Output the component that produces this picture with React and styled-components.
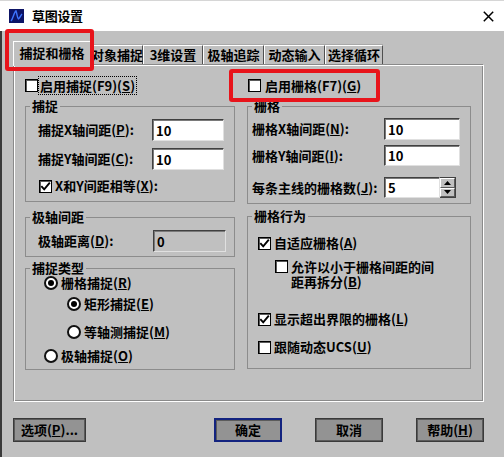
import React from 'react';
import styled, { createGlobalStyle } from 'styled-components';

const FONT = `"Noto Sans CJK SC", "Noto Sans", "Liberation Sans", sans-serif`;

const Global = createGlobalStyle`
  html, body { margin: 0; padding: 0; background: #c0c0c0; }
  #root { width: 504px; height: 457px; overflow: hidden; }
  * { box-sizing: border-box; }
`;

const Window = styled.div`
  position: relative;
  width: 504px;
  height: 457px;
  display: flex;
  flex-direction: column;
  background: #c0c0c0;
  font-family: ${FONT};
  font-size: 13px;
  font-weight: 700;
  line-height: 16px;
  color: #000;
  overflow: hidden;
`;

const TitleBar = styled.div`
  height: 31px;
  flex: none;
  background: #fff;
  border-top: 1px solid #d6d6d6;
  display: flex;
  align-items: center;
  padding: 0 10px 0 9px;
`;

const TitleText = styled.div`
  margin-left: 8px;
  flex: 1;
  font-size: 13px;
  letter-spacing: -0.3px;
`;

const Body = styled.div`
  flex: 1;
  display: flex;
  flex-direction: column;
  border-left: 2px solid #3a3a3a;
  padding: 10px 0 0 11px;
`;

const TabStrip = styled.div`
  display: flex;
  align-items: flex-end;
  height: 23px;
`;

const Tab = styled.div`
  width: ${p => p.$w}px;
  height: ${p => (p.$active ? 25 : 19)}px;
  margin-bottom: ${p => (p.$active ? -2 : 0)}px;
  padding-bottom: ${p => (p.$active ? 2 : 0)}px;
  position: relative;
  z-index: ${p => (p.$active ? 3 : 1)};
  background: #c0c0c0;
  border-top: 1px solid #fff;
  border-left: 1px solid #fff;
  border-right: 1px solid #505050;
  box-shadow: ${p => (p.$active ? 'none' : '0 -1px 0 #a8a8a8')};
  display: flex;
  align-items: center;
  justify-content: center;
  white-space: nowrap;
`;

const Panel = styled.div`
  position: relative;
  z-index: 2;
  width: 471px;
  height: 338px;
  border: 1px solid;
  border-color: #8a8a8a #fff #fff #8a8a8a;
  box-shadow: inset 1px 1px 0 #fff, inset -1px -1px 0 #8a8a8a;
  padding: 12px 12px 0 11px;
  display: grid;
  grid-template-columns: 210px 224px;
  column-gap: 12px;
  align-items: start;
`;

const Column = styled.div`
  display: flex;
  flex-direction: column;
`;

const TopCheck = styled.div`
  display: flex;
  align-items: center;
  height: 17px;
  padding-left: ${p => p.$pl || 0}px;
  gap: ${p => p.$gap || 0}px;
`;

const FocusLabel = styled.span`
  outline: 1px dotted #000;
  outline-offset: 0;
  padding: 0 1px;
  margin-left: 1px;
  line-height: 17px;
  white-space: nowrap;
`;

const Group = styled.fieldset`
  margin: ${p => p.$mt || 0}px 0 0 0;
  height: ${p => p.$h}px;
  border: 1px solid #8c8c8c;
  padding: 0;
  min-width: 0;
`;

const Legend = styled.legend`
  margin-left: 4px;
  padding: 0 2px;
  line-height: 16px;
  height: 16px;
`;

const GroupBody = styled.div`
  display: flex;
  flex-direction: column;
  padding: ${p => p.$pt || 0}px ${p => p.$pr || 0}px 0 ${p => p.$pl || 0}px;
`;

const FieldRow = styled.div`
  display: flex;
  align-items: center;
  justify-content: space-between;
  height: ${p => p.$h || 22}px;
  margin-top: ${p => p.$mt || 0}px;
  white-space: nowrap;
`;

const TextBox = styled.input`
  width: ${p => p.$w}px;
  height: 100%;
  margin: 0;
  padding: 0 3px;
  font: inherit;
  color: #000;
  background: ${p => (p.disabled ? '#c0c0c0' : '#fff')};
  border: 1px solid;
  border-color: #404040 #e0e0e0 #e0e0e0 #404040;
  box-shadow: inset 1px 1px 0 #7a7a7a;
  outline: none;
  &:disabled { color: #000; }
`;

const Spinner = styled.div`
  display: flex;
  width: 72px;
  height: 100%;
  margin-right: 4px;
`;

const SpinButtons = styled.div`
  width: 16px;
  display: flex;
  flex-direction: column;
  background: #c0c0c0;
  border: 1px solid #404040;
  border-left: none;
`;

const SpinBtn = styled.div`
  flex: 1;
  border: 1px solid;
  border-color: #fff #5a5a5a #5a5a5a #fff;
  display: flex;
  align-items: center;
  justify-content: center;
`;

const OptionRow = styled.div`
  display: flex;
  align-items: ${p => (p.$top ? 'flex-start' : 'center')};
  gap: 3px;
  height: ${p => (p.$auto ? 'auto' : '14px')};
  margin-top: ${p => p.$mt || 0}px;
  padding-left: ${p => p.$indent || 0}px;
  white-space: nowrap;
`;

const TwoLine = styled.span`
  line-height: 15px;
  white-space: normal;
`;

const Box = styled.span`
  width: 13px;
  height: 13px;
  flex: none;
  border: 1px solid #000;
  box-shadow: inset 1px 1px 0 #5a5a5a;
  background: #fff;
  display: flex;
  align-items: center;
  justify-content: center;
  margin-top: ${p => p.$mt || 0}px;
`;

const Radio = styled.span`
  width: 14px;
  height: 14px;
  flex: none;
  border-radius: 50%;
  border: 2px solid #111;
  background: #fff;
  display: flex;
  align-items: center;
  justify-content: center;
  &::after {
    content: '';
    width: 6px;
    height: 6px;
    border-radius: 50%;
    background: #000;
    display: ${p => (p.$on ? 'block' : 'none')};
  }
`;

const ButtonRow = styled.div`
  display: flex;
  width: 471px;
  margin-top: 16px;
`;

const ButtonGroup = styled.div`
  display: flex;
  gap: 33px;
  margin-left: auto;
`;

const Button = styled.button`
  width: ${p => p.$w}px;
  height: 24px;
  margin: 0;
  padding: 0;
  font: inherit;
  color: #000;
  background: #939393;
  border: ${p => (p.$default ? '2px solid #13237f' : '1px solid #3a3a3a')};
  box-shadow: ${p => (p.$default ? 'inset 1px 1px 0 #5b5b5b' : 'inset 1px 1px 0 #5b5b5b, inset -1px -1px 0 #5b5b5b')};
  display: flex;
  align-items: center;
  justify-content: center;
  white-space: nowrap;
`;

const Highlight = styled.div`
  position: absolute;
  left: ${p => p.$x}px;
  top: ${p => p.$y}px;
  width: ${p => p.$w}px;
  height: ${p => p.$h}px;
  border: 4px solid #e8141b;
  border-radius: 3px;
  z-index: 10;
  pointer-events: none;
`;

const U = styled.u`
  text-decoration: underline;
  text-underline-offset: 1px;
  text-decoration-thickness: 1px;
`;

function CheckBox({ checked, mt }) {
  return (
    <Box $mt={mt}>
      {checked && (
        <svg width="11" height="11" viewBox="0 0 11 11">
          <path d="M1.3 5.2 L4.2 8.4 L9.8 1.6" fill="none" stroke="#000" strokeWidth="1.9" />
        </svg>
      )}
    </Box>
  );
}

function AppIcon() {
  return (
    <svg width="15" height="14" viewBox="0 0 15 14">
      <rect width="15" height="14" fill="#0d1466" />
      <path d="M2 12 C4 10 5 3 7 2 C8 4 8 9 9.5 10 C11 9 12 6 13 5" fill="none" stroke="#3d74ff" strokeWidth="1.4" />
    </svg>
  );
}

function CloseIcon() {
  return (
    <svg width="11" height="11" viewBox="0 0 11 11">
      <path d="M0.8 0.8 L10.2 10.2 M10.2 0.8 L0.8 10.2" stroke="#000" strokeWidth="1.5" />
    </svg>
  );
}

function Arrow({ up }) {
  return (
    <svg width="7" height="4" viewBox="0 0 7 4">
      <path d={up ? 'M0 4 L3.5 0 L7 4 Z' : 'M0 0 L7 0 L3.5 4 Z'} fill="#000" />
    </svg>
  );
}

const tabs = [
  { label: '捕捉和栅格', w: 78, active: true },
  { label: '对象捕捉', w: 52 },
  { label: '3维设置', w: 60 },
  { label: '极轴追踪', w: 61 },
  { label: '动态输入', w: 61 },
  { label: '选择循环', w: 58 },
];

export default function App() {
  return (
    <>
      <Global />
      <Window>
        <TitleBar>
          <AppIcon />
          <TitleText>草图设置</TitleText>
          <CloseIcon />
        </TitleBar>
        <Body>
          <TabStrip>
            {tabs.map(t => (
              <Tab key={t.label} $w={t.w} $active={t.active}>{t.label}</Tab>
            ))}
          </TabStrip>
          <Panel>
            <Column>
              <TopCheck>
                <CheckBox />
                <FocusLabel>启用捕捉(F9)(<U>S</U>)</FocusLabel>
              </TopCheck>
              <Group $mt={4} $h={104}>
                <Legend>捕捉</Legend>
                <GroupBody $pt={5} $pl={12} $pr={10}>
                  <FieldRow>
                    <span>捕捉X轴间距(<U>P</U>):</span>
                    <TextBox $w={72} defaultValue="10" />
                  </FieldRow>
                  <FieldRow $mt={7}>
                    <span>捕捉Y轴间距(<U>C</U>):</span>
                    <TextBox $w={72} defaultValue="10" />
                  </FieldRow>
                  <OptionRow $mt={9} $indent={1}>
                    <CheckBox checked />
                    <span>X和Y间距相等(<U>X</U>):</span>
                  </OptionRow>
                </GroupBody>
              </Group>
              <Group $mt={7} $h={48}>
                <Legend>极轴间距</Legend>
                <GroupBody $pt={5} $pl={12} $pr={8}>
                  <FieldRow>
                    <span>极轴距离(<U>D</U>):</span>
                    <TextBox $w={73} defaultValue="0" disabled />
                  </FieldRow>
                </GroupBody>
              </Group>
              <Group $mt={3} $h={110}>
                <Legend>捕捉类型</Legend>
                <GroupBody $pt={0} $pl={18}>
                  <OptionRow>
                    <Radio $on />
                    <span>栅格捕捉(<U>R</U>)</span>
                  </OptionRow>
                  <OptionRow $mt={7} $indent={23}>
                    <Radio $on />
                    <span>矩形捕捉(<U>E</U>)</span>
                  </OptionRow>
                  <OptionRow $mt={14} $indent={23}>
                    <Radio />
                    <span>等轴测捕捉(<U>M</U>)</span>
                  </OptionRow>
                  <OptionRow $mt={10}>
                    <Radio />
                    <span>极轴捕捉(<U>O</U>)</span>
                  </OptionRow>
                </GroupBody>
              </Group>
            </Column>

            <Column>
              <TopCheck $pl={1} $gap={4}>
                <CheckBox />
                <span>启用栅格(F7)(<U>G</U>)</span>
              </TopCheck>
              <Group $mt={4} $h={106}>
                <Legend>栅格</Legend>
                <GroupBody $pt={4} $pl={4} $pr={10}>
                  <FieldRow>
                    <span>栅格X轴间距(<U>N</U>):</span>
                    <TextBox $w={76} defaultValue="10" />
                  </FieldRow>
                  <FieldRow $mt={5} $h={21}>
                    <span>栅格Y轴间距(<U>I</U>):</span>
                    <TextBox $w={76} defaultValue="10" />
                  </FieldRow>
                  <FieldRow $mt={11} $h={21}>
                    <span>每条主线的栅格数(<U>J</U>):</span>
                    <Spinner>
                      <TextBox $w={56} defaultValue="5" />
                      <SpinButtons>
                        <SpinBtn><Arrow up /></SpinBtn>
                        <SpinBtn><Arrow /></SpinBtn>
                      </SpinButtons>
                    </Spinner>
                  </FieldRow>
                </GroupBody>
              </Group>
              <Group $mt={4} $h={161}>
                <Legend>栅格行为</Legend>
                <GroupBody $pt={12} $pl={10}>
                  <OptionRow>
                    <CheckBox checked />
                    <span>自适应栅格(<U>A</U>)</span>
                  </OptionRow>
                  <OptionRow $mt={9} $indent={17} $top $auto>
                    <CheckBox mt={1} />
                    <TwoLine>允许以小于栅格间距的间<br />距再拆分(<U>B</U>)</TwoLine>
                  </OptionRow>
                  <OptionRow $mt={23}>
                    <CheckBox checked />
                    <span>显示超出界限的栅格(<U>L</U>)</span>
                  </OptionRow>
                  <OptionRow $mt={14}>
                    <CheckBox />
                    <span>跟随动态UCS(<U>U</U>)</span>
                  </OptionRow>
                </GroupBody>
              </Group>
            </Column>
          </Panel>

          <ButtonRow>
            <Button $w={73}>选项(<U>P</U>)...</Button>
            <ButtonGroup>
              <Button $w={68} $default>确定</Button>
              <Button $w={68}>取消</Button>
              <Button $w={68}>帮助(<U>H</U>)</Button>
            </ButtonGroup>
          </ButtonRow>
        </Body>

        <Highlight $x={5} $y={29} $w={89} $h={42} />
        <Highlight $x={229} $y={69} $w={151} $h={33} />
      </Window>
    </>
  );
}
